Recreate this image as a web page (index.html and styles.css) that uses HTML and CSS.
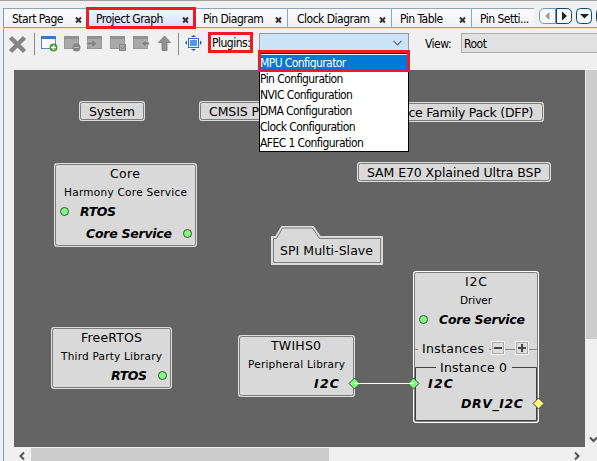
FILE: index.html
```html
<!DOCTYPE html>
<html lang="en">
<head>
<meta charset="utf-8">
<title>Project Graph</title>
<link rel="stylesheet" href="styles.css">
</head>
<body>
<div class="window">
  <nav class="tabs">
    <div class="tab start"><span>Start Page</span><i class="close"></i></div>
    <div class="tab graph active"><span>Project Graph</span><i class="close"></i></div>
    <div class="tab pin"><span>Pin Diagram</span><i class="close"></i></div>
    <div class="tab clock"><span>Clock Diagram</span><i class="close"></i></div>
    <div class="tab table"><span>Pin Table</span><i class="close"></i></div>
    <div class="tab settings"><span>Pin Setti...</span></div>
    <svg class="tab-nav" width="63" height="20" viewBox="534 8 63 20">
      <g fill="#f8f9fb" stroke="#0c456f">
        <path d="M555.5 8.500h-11q-5 0-5 5v5q0 5 5 5h11z" stroke="#6f93ac"/>
        <path d="M556.500 8.500h10q5 0 5 5v5q0 5-5 5h-10z"/>
        <rect x="576.500" y="8.500" width="15" height="15" rx="4"/>
        <rect x="596.500" y="8.500" width="15" height="15" rx="4"/>
      </g>
      <path d="M549.500 12v8l-4.500-4z" fill="#999"/>
      <path d="M562 11.500v9l5-4.500z" fill="#222"/>
      <path d="M580 14h9l-4.500 4.500z" fill="#222"/>
    </svg>
  </nav>
  <div class="toolbar">
    <svg class="tools" width="204" height="41" viewBox="4 29 204 41">
      <path d="M10.500 37.500l14 14M24.500 37.500l-14 14" stroke="#858585" stroke-width="4.500"/>
      <path d="M34.500 33v22M178.500 33v22" stroke="#8c8c8c"/>
      <rect x="41.500" y="36.500" width="14" height="12" fill="#f6faff" stroke="#5b8ac6"/>
      <path d="M41 37.500h15" stroke="#3978c4" stroke-width="3"/>
      <circle cx="53.500" cy="47.500" r="4" fill="#509a32"/>
      <path d="M51 47.500h5M53.500 45v5" stroke="#fff" stroke-width="1.300"/>
      <g fill="#a9a9a9" stroke="#979797">
        <rect x="64.500" y="36.500" width="14" height="12"/>
        <rect x="87.500" y="36.500" width="14" height="12"/>
        <rect x="110.500" y="36.500" width="14" height="12"/>
        <rect x="133.500" y="36.500" width="14" height="12"/>
      </g>
      <path d="M64 37.500h15M87 37.500h15M110 37.500h15M133 37.500h15" stroke="#929292" stroke-width="3"/>
      <circle cx="76.500" cy="47.500" r="4" fill="#858585"/>
      <path d="M74.500 47.500h4" stroke="#c4c4c4"/>
      <path d="M87 42h5v-3l5 4.500-5 4.500v-3h-5z" fill="#858585" stroke="#b8b8b8" stroke-width=".6"/>
      <rect x="119.500" y="44.500" width="6" height="6" fill="#aaa" stroke="#858585"/>
      <path d="M121 47l1.500 2 3-3.500" fill="none" stroke="#777"/>
      <path d="M141.500 43.500l4.500-4v2.500h3v3h-3v2.500z" fill="#858585" stroke="#c4c4c4" stroke-width=".6"/>
      <path d="M164.500 36l6 6.500h-3.500v8h-5v-8h-3.500z" fill="#909090" stroke="#858585"/>
      <rect x="188.500" y="38.500" width="10" height="9" fill="#fff" stroke="#3264df"/>
      <rect x="190" y="40" width="7" height="6" fill="#4b9aef"/>
      <path d="M191 37h5l-2.500-2zM191 49h5l-2.500 2zM187 40.500v4.500l-2-2.250zM200 40.500v4.500l2-2.250z" fill="#2455ce"/>
    </svg>
    <div class="plugins-label"><span>Plugins:</span></div>
    <div class="combo plugins"><svg width="9" height="6" viewBox="0 0 9 6"><path d="M.5 .8l4 4 4-4" fill="none" stroke="#596674" stroke-width="1.200"/></svg></div>
    <span class="view-label">View:</span>
    <div class="combo view"><span>Root</span></div>
    <ul class="menu">
      <li class="selected"><span>MPU Configurator</span></li>
      <li><span>Pin Configuration</span></li>
      <li><span>NVIC Configuration</span></li>
      <li><span>DMA Configuration</span></li>
      <li><span>Clock Configuration</span></li>
      <li><span>AFEC 1 Configuration</span></li>
    </ul>
  </div>
  <main class="workspace">
    <svg class="graph-canvas" width="571" height="377" viewBox="14 70 571 377">
      <g class="box">
        <rect class="outer" x="79.500" y="101.500" width="65" height="19" rx="2"/><rect class="inner" x="80.500" y="102.500" width="63" height="17" rx="2"/>
        <rect class="outer" x="199.500" y="101.500" width="100" height="19" rx="2"/><rect class="inner" x="200.500" y="102.500" width="98" height="17" rx="2"/>
        <rect class="outer" x="359.500" y="102.500" width="184" height="19" rx="2"/><rect class="inner" x="360.500" y="103.500" width="182" height="17" rx="2"/>
        <rect class="outer" x="357.500" y="162.500" width="193" height="19" rx="2"/><rect class="inner" x="358.500" y="163.500" width="191" height="17" rx="2"/>
        <rect class="outer" x="54.500" y="163.500" width="142" height="83" rx="2"/><rect class="inner" x="55.500" y="164.500" width="140" height="81" rx="2"/>
        <rect class="outer" x="51.500" y="327.500" width="120" height="61" rx="2"/><rect class="inner" x="52.500" y="328.500" width="118" height="59" rx="2"/>
        <rect class="outer" x="238.500" y="335.500" width="116" height="61" rx="2"/><rect class="inner" x="239.500" y="336.500" width="114" height="59" rx="2"/>
        <rect class="outer bright" x="413.500" y="271.500" width="125" height="151" rx="2"/><rect class="inner" x="414.500" y="272.500" width="123" height="149" rx="2"/>
        <path class="outer" d="M271.500 236.500h4l6-10h32l7 10h62v28h-111z"/>
        <path class="inner" d="M273.500 238.500h3l6-10.500h30l7 10.500h61v24h-107z"/>
      </g>
      <g class="title">
        <text x="89" y="116" textLength="46">System</text>
        <text x="209" y="116" textLength="50">CMSIS P</text>
        <text x="408.500" y="117" textLength="125">ce Family Pack (DFP)</text>
        <text x="367" y="177" textLength="174">SAM E70 Xplained Ultra BSP</text>
        <text x="110" y="178" textLength="30">Core</text>
        <text x="81" y="342" textLength="61">FreeRTOS</text>
        <text x="271" y="350" textLength="50">TWIHS0</text>
        <text x="280" y="255" textLength="93">SPI Multi-Slave</text>
        <text x="465" y="286" textLength="22">I2C</text>
      </g>
      <g class="kind">
        <text x="64" y="196" textLength="123">Harmony Core Service</text>
        <text x="61" y="360" textLength="101">Third Party Library</text>
        <text x="248" y="368" textLength="97">Peripheral Library</text>
        <text x="460" y="304" textLength="32">Driver</text>
      </g>
      <path d="M414 349.500h4M489 349.500h3M505 349.500h10M529 349.500h9" stroke="#858585"/>
      <path d="M436 367.500h-20.500v53h121v-53H512" fill="none" stroke="#404040"/>
      <g class="title">
        <text x="422" y="353" textLength="62">Instances</text>
        <text x="440" y="372" textLength="67">Instance 0</text>
      </g>
      <g fill="#ddd" stroke="#f4f4f4"><rect x="491.500" y="341.500" width="13" height="13"/><rect x="515.500" y="341.500" width="13" height="13"/></g>
      <g fill="none" stroke="#aaa"><rect x="492.500" y="342.500" width="11" height="11"/><rect x="516.500" y="342.500" width="11" height="11"/></g>
      <path d="M494 348h8M518 348h8M522 344v8" stroke="#444" stroke-width="2"/>
      <g class="port">
        <text x="80" y="216" textLength="36">RTOS</text>
        <text x="86" y="238" textLength="86">Core Service</text>
        <text x="111" y="380" textLength="36">RTOS</text>
        <text x="314" y="388" textLength="25">I2C</text>
        <text x="439" y="324" textLength="86">Core Service</text>
        <text x="428" y="388" textLength="25">I2C</text>
        <text x="461" y="408" textLength="62">DRV_I2C</text>
      </g>
      <g fill="#7cff7c" stroke="#404a40">
        <circle cx="64.500" cy="211.500" r="4"/><circle cx="187.500" cy="233.500" r="4"/><circle cx="162.500" cy="375.500" r="4"/><circle cx="423.500" cy="319.500" r="4"/>
        <path d="M354.500 378l5.500 5.500-5.500 5.500-5.500-5.500zM413.500 378l5.500 5.500-5.500 5.500-5.500-5.500z"/>
        <path d="M538.500 398l5.500 5.500-5.500 5.500-5.500-5.500z" fill="#fff982"/>
      </g>
      <path d="M354 383.500h60" stroke="#fff"/>
    </svg>
    <div class="scroll-v"><div class="thumb-v"></div><svg width="11" height="27" viewBox="586 420 11 27"><path d="M590 436.500l3.500 3.500 3.500-3.500" fill="none" stroke="#555" stroke-width="2"/></svg></div>
    <div class="scroll-h"><svg width="17" height="13" viewBox="14 448 17 13"><path d="M24 452.500l-3.500 3.500 3.500 3.500" fill="none" stroke="#555" stroke-width="2"/></svg><div class="thumb-h"></div><svg class="arrow-right" width="17" height="13" viewBox="569 448 17 13"><path d="M575 452.500l3.500 3.500-3.500 3.500" fill="none" stroke="#555" stroke-width="2"/></svg></div>
  </main>
</div>
</body>
</html>
```

FILE: styles.css
```css
*, *::before, *::after { box-sizing: border-box; }
body { margin: 0; background: #f0f0f0; }
.window {
  width: 597px; height: 461px; overflow: hidden;
  border-top: 1px solid #a0a0a0; padding: 7px 0 0 3px;
  font: 12px/14px "DejaVu Sans Condensed", "DejaVu Sans", sans-serif;
  font-stretch: condensed; letter-spacing: -.5px; color: #000;
}
span { white-space: nowrap; }
.tabs { display: flex; height: 20px; border-bottom: 1px solid #89a2b7; border-left: 1px solid #7b9ab8; }
.tab {
  display: flex; align-items: center; height: 19px; padding: 2px 6px 0 8px;
  justify-content: space-between; border-top: 1px solid #8ba7be; border-right: 1px solid #8ba7be;
  background: linear-gradient(#fbfbfc, #f0f1f4);
}
.start { width: 84px; }
.graph { width: 107px; }
.pin { width: 93px; }
.clock { width: 104px; padding-left: 9px; }
.table { width: 80px; }
.settings { width: 62px; border-right: 0; }
.active {
  position: relative; padding-top: 1px; border-top: 2px solid #ffb82e;
  background: linear-gradient(#f1f4ff, #d6defa);
}
.active::after {
  content: ""; position: absolute; left: -2px; top: -3px; width: 110px; height: 22px;
  border: 3px solid #ed1c24; z-index: 2;
}
.close { position: relative; width: 5px; height: 5px; margin-top: 1px; }
.close::before, .close::after {
  content: ""; position: absolute; left: -1px; top: 2px; width: 7px; height: 1.8px;
  background: #333; transform: rotate(45deg);
}
.close::after { transform: rotate(-45deg); }
.tab-nav { flex: none; }
.toolbar {
  position: relative; display: flex; height: 42px; align-items: flex-start;
  border-left: 1px solid #7b9ab8; border-top: 1px solid #f3e6cf;
}
.tools { flex: none; }
.plugins-label {
  width: 45px; height: 21px; margin-top: 3px; border: 3px solid #ed1c24;
  padding-left: 1px; line-height: 16px;
}
.combo { height: 20px; margin-top: 4px; }
.plugins {
  display: flex; align-items: center; justify-content: flex-end; width: 150px; margin-left: 6px;
  padding-right: 6px; border: 1px solid #8b9ba8; background: #cce4f7;
}
.view-label { margin: 8px 7px 0 16px; width: 29px; }
.view { flex: 1; border: 1px solid #adadad; border-right: 0; background: #e1e1e1; padding: 3px 0 0 2px; }
.menu {
  position: absolute; left: 255px; top: 24px; z-index: 3; width: 150px; height: 99px;
  margin: 0; padding: 1px 0 0; border: 1px solid #000; list-style: none; background: #fff;
  letter-spacing: -.58px;
}
.menu li { height: 16px; line-height: 16px; padding-left: 0; }
.menu .selected { position: relative; color: #fff; background: #0078d7; }
.selected::after {
  content: ""; position: absolute; left: -2px; top: -5px; width: 152px; height: 22px;
  border: 3px solid #ed1c24;
}
.workspace {
  display: grid; grid-template: 378px 13px / 572px 11px; height: 391px; padding-left: 10px;
  border-left: 1px solid #7b9ab8;
}
.graph-canvas { display: block; background: #646464; }
.scroll-v { display: flex; flex-direction: column; justify-content: space-between; background: #f0f0f0; }
.thumb-v { height: 269px; background: #cdcdcd; }
.scroll-h { display: flex; background: #f0f0f0; }
.thumb-h { width: 298px; background: #cdcdcd; }
.arrow-right { margin-left: auto; }
.box { fill: #d9d9d9; }
.outer { stroke: #dcdcdc; }
.bright { stroke: #fff; }
.inner { stroke: #7d7d7d; }
.title, .kind, .port { font-family: "DejaVu Sans", sans-serif; font-stretch: normal; letter-spacing: 0; }
.title { font-size: 12.5px; }
.kind { font-size: 10.5px; }
.port { font-size: 12.5px; font-weight: bold; font-style: italic; }
```
